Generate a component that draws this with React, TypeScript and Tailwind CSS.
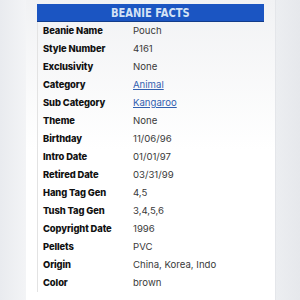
import React from 'react';

type Fact = { label: string; value: string; link?: boolean };

const facts: Fact[] = [
  { label: 'Beanie Name', value: 'Pouch' },
  { label: 'Style Number', value: '4161' },
  { label: 'Exclusivity', value: 'None' },
  { label: 'Category', value: 'Animal', link: true },
  { label: 'Sub Category', value: 'Kangaroo', link: true },
  { label: 'Theme', value: 'None' },
  { label: 'Birthday', value: '11/06/96' },
  { label: 'Intro Date', value: '01/01/97' },
  { label: 'Retired Date', value: '03/31/99' },
  { label: 'Hang Tag Gen', value: '4,5' },
  { label: 'Tush Tag Gen', value: '3,4,5,6' },
  { label: 'Copyright Date', value: '1996' },
  { label: 'Pellets', value: 'PVC' },
  { label: 'Origin', value: 'China, Korea, Indo' },
  { label: 'Color', value: 'brown' },
];

export default function App() {
  return (
    <div className="w-[300px] h-[300px] flex bg-[#eef0f3] overflow-hidden font-['Inter','Noto_Sans',sans-serif]">
      {/* left gutter */}
      <div className="w-[26px] bg-gradient-to-r from-[#e9ebef] to-[#f3f4f6]" />

      {/* card */}
      <div className="w-[249px] bg-gradient-to-b from-[#f1f2f4] via-white to-white pt-[4px] px-[11px]">
        <div className="h-[18px] bg-[#1b55c2] flex items-center justify-center border-b border-[#123c8a]">
          <span className="inline-block scale-x-[0.85] text-[13px] font-bold text-[#d4e2f5] font-['DejaVu_Sans_Condensed','DejaVu_Sans',sans-serif]">
            BEANIE FACTS
          </span>
        </div>
        <div className="border-l border-[#e3e3e3]">
          {facts.map((f) => (
            <div key={f.label} className="h-[18px] flex items-center">
              <div className="w-[95px] pl-[5px] text-[9.4px] font-extrabold tracking-[-0.1px] text-[#111]">{f.label}</div>
              {f.link ? (
                <div className="text-[9.6px] text-[#3260b0] underline">{f.value}</div>
              ) : (
                <div className="text-[9.6px] text-[#3a3a3a]">{f.value}</div>
              )}
            </div>
          ))}
        </div>
      </div>

      {/* right gutter */}
      <div className="flex-1 border-l border-[#e4e6ea] bg-gradient-to-r from-[#eceef1] to-[#e6e8ec]" />
    </div>
  );
}
